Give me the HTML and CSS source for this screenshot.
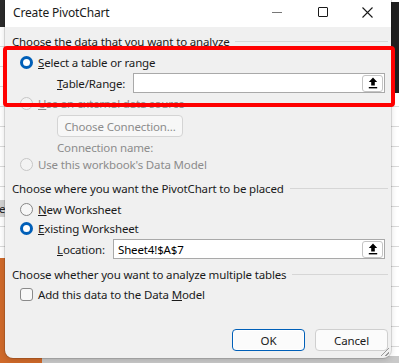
FILE: index.html
```html
<!DOCTYPE html>
<html lang="en">
<head>
  <meta charset="UTF-8" />
  <title>Create PivotChart</title>
  <link rel="stylesheet" href="styles.css">
</head>
<body>

  <div class="backdrop">
    <div class="bg-left-top"></div>
    <div class="bg-left-cell">e</div>
    <div class="bg-left-orange"></div>
    <div class="bg-bottom"></div>
    <div class="bg-right-top"></div>
  </div>

  <div class="dialog">
    <div class="titlebar">
      <span class="title">Create PivotChart</span>
      <div class="win-controls">
        <span class="ctl ctl-min"></span>
        <span class="ctl ctl-max"></span>
        <svg class="ctl-close" width="11" height="11" viewBox="0 0 11 11">
          <path d="M0.5 0.5 L10.5 10.5 M10.5 0.5 L0.5 10.5" stroke="#1a1a1a" stroke-width="1.1" fill="none"/>
        </svg>
      </div>
    </div>

    <div class="content">
      <div class="group-head"><span>Choose the data that you want to analyze</span></div>

      <div class="radio-row row-1">
        <span class="radio checked"></span>
        <span><u>S</u>elect a table or range</span>
      </div>

      <div class="field-row row-table">
        <span class="field-label"><u>T</u>able/Range:</span>
        <div class="input input-table">
          <span class="input-text"></span>
          <span class="pick-btn">
            <svg width="10" height="12" viewBox="0 0 10 12">
              <path d="M5 0.5 L0.8 5 H3.2 V8.5 H6.8 V5 H9.2 Z" fill="#000"/>
              <rect x="0.8" y="10" width="8.4" height="1.4" fill="#000"/>
            </svg>
          </span>
        </div>
      </div>

      <div class="radio-row row-2 disabled">
        <span class="radio"></span>
        <span><u>U</u>se an external data source</span>
      </div>

      <div class="conn-btn">Choose Connection...</div>

      <div class="conn-name disabled">Connection name:</div>

      <div class="radio-row row-3 disabled">
        <span class="radio"></span>
        <span>Use this workbook's Data Model</span>
      </div>

      <div class="group-head head-2"><span>Choose where you want the PivotChart to be placed</span></div>

      <div class="radio-row row-new">
        <span class="radio"></span>
        <span><u>N</u>ew Worksheet</span>
      </div>

      <div class="radio-row row-existing">
        <span class="radio checked"></span>
        <span><u>E</u>xisting Worksheet</span>
      </div>

      <div class="field-row row-location">
        <span class="field-label"><u>L</u>ocation:</span>
        <div class="input input-location">
          <span class="input-text">Sheet4!$A$7</span>
          <span class="pick-btn">
            <svg width="10" height="12" viewBox="0 0 10 12">
              <path d="M5 0.5 L0.8 5 H3.2 V8.5 H6.8 V5 H9.2 Z" fill="#000"/>
              <rect x="0.8" y="10" width="8.4" height="1.4" fill="#000"/>
            </svg>
          </span>
        </div>
      </div>

      <div class="group-head head-3"><span>Choose whether you want to analyze multiple tables</span></div>

      <div class="check-row">
        <span class="checkbox"></span>
        <span>Add this data to the Data <u>M</u>odel</span>
      </div>

      <div class="actions">
        <div class="btn btn-primary">OK</div>
        <div class="btn">Cancel</div>
      </div>
    </div>

    <span class="grip"></span>
  </div>

  <div class="highlight"></div>

</body>
</html>
```

FILE: styles.css
```css
* {
  margin: 0;
  padding: 0;
  box-sizing: border-box;
}

body {
  width: 399px;
  height: 363px;
  overflow: hidden;
  position: relative;
  font-family: 'Noto Sans', 'Open Sans', sans-serif;
  font-size: 11.5px;
  letter-spacing: -0.15px;
  color: #1a1a1a;
  background-color: #ffffff;
  background-image: linear-gradient(#dadada 1px, transparent 1px);
  background-size: 100% 20px;
  background-position: 0 6px;
}

/* spreadsheet behind the dialog */
.backdrop div {
  position: absolute;
}

.bg-left-top {
  left: 0;
  top: 0;
  width: 8px;
  height: 27px;
  background: #2b2b2b;
}

.bg-left-cell {
  left: 0;
  top: 200px;
  width: 8px;
  height: 17px;
  background: #d2d2d2;
  line-height: 17px;
  text-indent: -1px;
  color: #222;
}

.bg-left-orange {
  left: 0;
  top: 258px;
  width: 8px;
  height: 105px;
  background: #d06a2a;
}

.bg-bottom {
  left: 0;
  top: 356px;
  width: 399px;
  height: 7px;
  background: linear-gradient(90deg, #d06a2a 0 42px, #c9c9c9 42px);
}

.bg-right-top {
  left: 388px;
  top: 2px;
  width: 11px;
  height: 91px;
  background: #1f1f1f;
}

/* dialog window */
.dialog {
  position: absolute;
  left: 5px;
  top: 0;
  width: 386px;
  height: 358px;
  background: #f0f0f0;
  border-radius: 0 0 8px 8px;
  box-shadow: 0 0 0 1px rgba(0,0,0,0.12), 0 2px 6px rgba(0,0,0,0.15);
  display: flex;
  flex-direction: column;
}

.titlebar {
  height: 27px;
  background: #ffffff;
  display: flex;
  align-items: center;
  justify-content: space-between;
  padding-left: 8px;
}

.title {
  font-size: 12px;
  color: #1a1a1a;
  margin-top: -2px;
}

.win-controls {
  display: flex;
  align-items: center;
  margin-top: -3px;
  margin-right: 18px;
}

.ctl-min {
  width: 10px;
  height: 1px;
  background: #777;
  margin-right: 36px;
}

.ctl-max {
  width: 10px;
  height: 10px;
  border: 1px solid #1a1a1a;
  border-radius: 1px;
  margin-right: 34px;
}

.content {
  padding: 6px 3px 0 7px;
  display: flex;
  flex-direction: column;
}

.group-head {
  height: 16px;
  display: flex;
  align-items: center;
  gap: 6px;
}

.group-head span {
  white-space: nowrap;
}

.group-head::after {
  content: "";
  flex: 1;
  height: 1px;
  background: #d6d6d6;
  margin-top: 1px;
}

.head-2 { margin-top: 8px; }
.head-3 { margin-top: 7px; }

.radio-row, .check-row {
  height: 16px;
  display: flex;
  align-items: center;
  gap: 5px;
  padding-left: 8px;
}

.row-1 { margin-top: 5px; }
.row-2 { margin-top: 2px; }
.row-new { margin-top: 5px; }
.row-existing { margin-top: 3px; }
.check-row { margin-top: 4px; }

.radio {
  width: 13px;
  height: 13px;
  border-radius: 50%;
  border: 1px solid #868686;
  background: #f6f6f6;
  flex-shrink: 0;
}

.radio.checked {
  border: 3px solid #005fb8;
  background: #ffffff;
}

.disabled {
  color: #8c8c8c;
}

.disabled .radio {
  border-color: #c6c6c6;
  background: #f3f3f3;
}

.checkbox {
  width: 13px;
  height: 13px;
  border: 1px solid #8a8a8a;
  border-radius: 3px;
  background: #f8f8f8;
  flex-shrink: 0;
}

.field-row {
  height: 20px;
  display: flex;
  align-items: center;
  padding-left: 45px;
  margin-top: 3px;
}

.row-table .field-label { width: 76px; }
.row-location .field-label { width: 56px; }

.input {
  flex: 1;
  height: 20px;
  background: #ffffff;
  border: 1px solid #a9a9a9;
  display: flex;
  align-items: center;
  justify-content: space-between;
  padding-left: 4px;
  margin-right: 3px;
}

.input-text {
  color: #000;
}

.pick-btn {
  width: 21px;
  height: 17px;
  margin-right: 1px;
  background: #ffffff;
  border: 1px solid #c4c4c4;
  border-radius: 3px;
  display: flex;
  align-items: center;
  justify-content: center;
}

.conn-btn {
  margin-top: 4px;
  margin-left: 45px;
  width: 126px;
  height: 22px;
  border: 1px solid #d4d4d4;
  border-radius: 4px;
  background: #f7f7f7;
  color: #8c8c8c;
  display: flex;
  align-items: center;
  justify-content: center;
}

.conn-name {
  margin-top: 3px;
  height: 16px;
  line-height: 16px;
  padding-left: 45px;
}

.actions {
  margin-top: 27px;
  display: flex;
  justify-content: flex-end;
  gap: 10px;
}

.btn {
  width: 73px;
  height: 22px;
  border: 1px solid #cfcfcf;
  border-radius: 4px;
  background: #fbfbfb;
  display: flex;
  align-items: center;
  justify-content: center;
  color: #1a1a1a;
}

.btn-primary {
  border: 1px solid #005fb8;
  box-shadow: inset 0 0 0 1px #ffffff;
}

.grip {
  position: absolute;
  right: 2px;
  bottom: 2px;
  width: 8px;
  height: 8px;
  background: linear-gradient(135deg, transparent 45%, #9a9a9a 45% 55%, transparent 55%, transparent 75%, #9a9a9a 75% 85%, transparent 85%);
}

/* red callout drawn over the screenshot */
.highlight {
  position: absolute;
  left: 3px;
  top: 46px;
  width: 392px;
  height: 61px;
  border: 4px solid #ff0000;
  border-radius: 4px;
}
```
